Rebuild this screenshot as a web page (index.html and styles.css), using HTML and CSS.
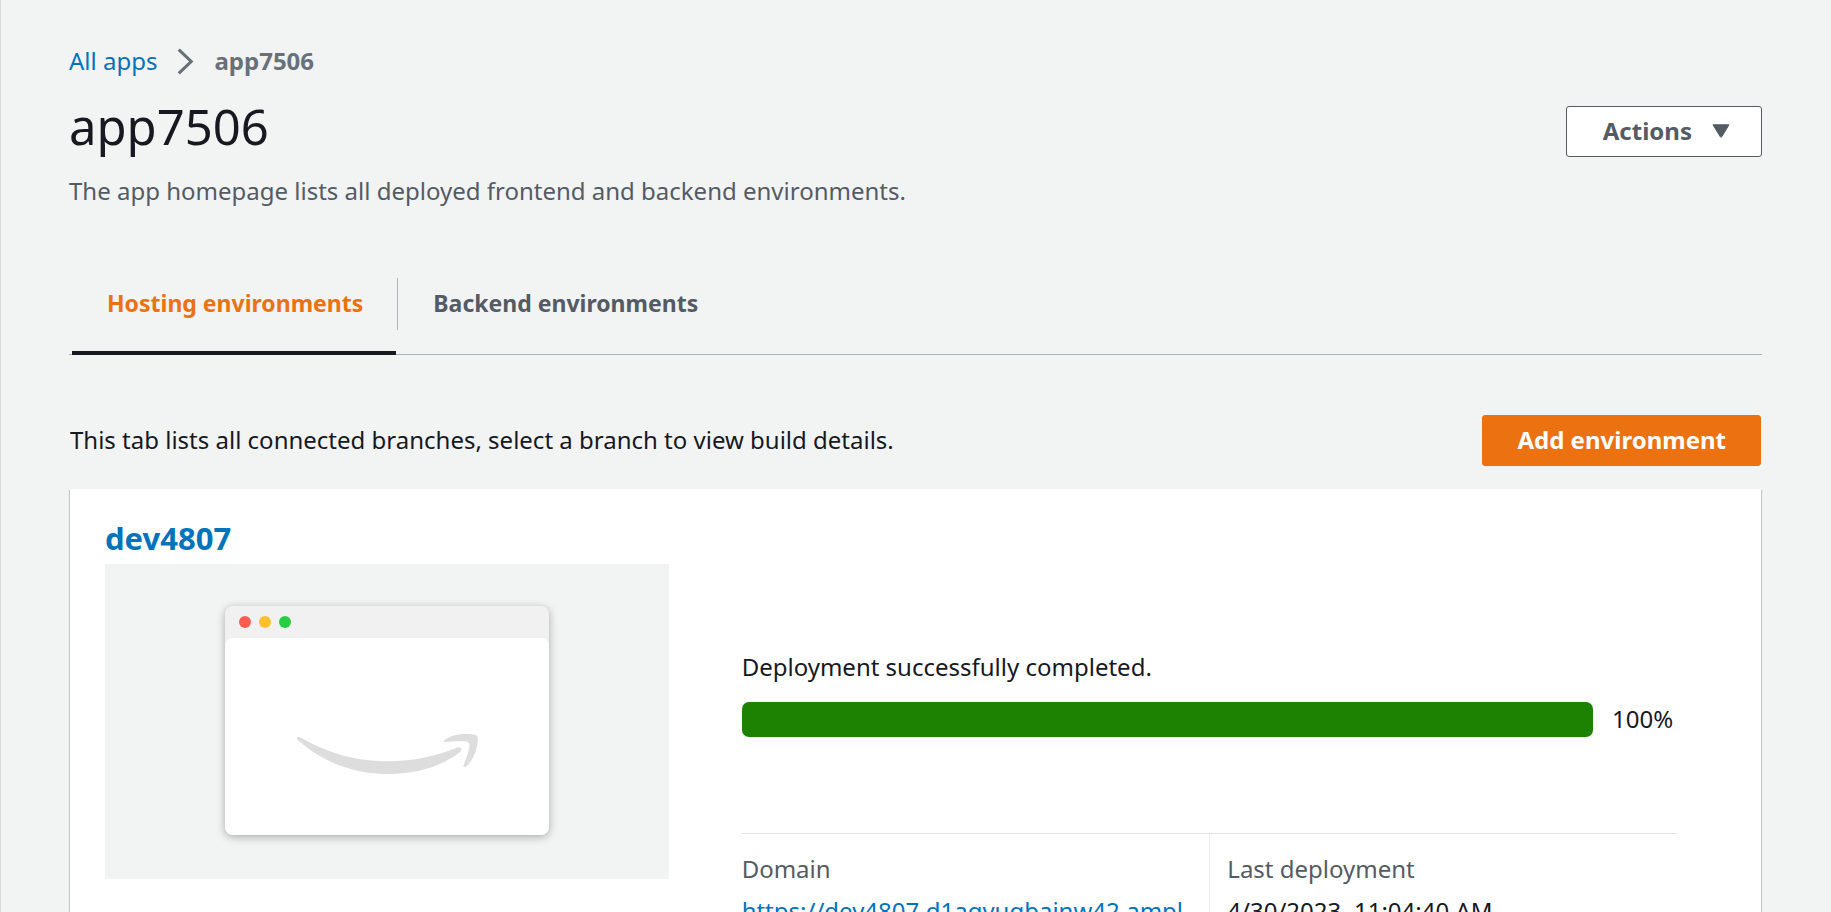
FILE: index.html
```html
<!DOCTYPE html>
<html lang="en">
<head>
<meta charset="utf-8">
<title>app7506</title>
<link rel="stylesheet" href="styles.css">
</head>
<body>
<main class="page">
  <nav class="crumbs" aria-label="Breadcrumb">
    <a href="#apps">All apps</a>
    <svg class="crumb-icon" viewBox="0 0 16 26" aria-hidden="true"><path d="M1.5 1.5L13.500 13L1.5 24.5"/></svg>
    <span class="crumb-current">app7506</span>
  </nav>

  <header class="heading">
    <div>
      <h1 class="title">app7506</h1>
      <p class="lead">The app homepage lists all deployed frontend and backend environments.</p>
    </div>
    <button class="btn btn-normal" type="button">Actions
      <svg class="caret" viewBox="0 0 18 14" aria-hidden="true"><path d="M1 .8H17L9.700 12.800Q9 13.600 8.300 12.800Z"/></svg>
    </button>
  </header>

  <div class="tabs" role="tablist">
    <button class="tab tab-active" type="button" role="tab" aria-selected="true">Hosting environments</button>
    <button class="tab" type="button" role="tab" aria-selected="false">Backend environments</button>
  </div>

  <div class="toolbar">
    <p class="toolbar-text">This tab lists all connected branches, select a branch to view build details.</p>
    <button class="btn btn-primary" type="button">Add environment</button>
  </div>

  <section class="card">
    <h2 class="branch"><a href="#dev4807">dev4807</a></h2>
    <div class="card-body">
      <div class="preview">
        <div class="window">
          <div class="window-bar"><i class="dot red"></i><i class="dot yellow"></i><i class="dot green"></i></div>
          <div class="window-body">
            <svg class="smile" viewBox="0 0 184 42" aria-hidden="true">
              <path d="M3.500 4C28 18 56 28.300 92 28.300C117 28.300 141 23 161.500 14.500C165 13.300 166.800 16.500 164 19C146 33 121 41 92 41C54 41 24 27 1.300 6.500C0 5 1.200 3 3.500 4Z"/>
              <path d="M148.500 7C155 2.300 163 1 170 1C175 1 179.500 1.600 181 2.800C182.300 4 181.800 9 181 13C179.500 21 175.500 29 170 33.500C168.500 34.600 167 34 167.600 32.300C170.500 25 173.500 16 173.500 12C173.500 9.500 171.500 8.600 168 8.300C162 7.800 156 8.600 149.500 9C147.300 9.200 147 8 148.500 7Z"/>
            </svg>
          </div>
        </div>
      </div>
      <div class="status">
        <label class="status-label" for="deploy">Deployment successfully completed.</label>
        <div class="progress-row">
          <progress class="progress" id="deploy" max="100" value="100"></progress>
          <span class="percent">100%</span>
        </div>
        <dl class="facts">
          <div class="fact">
            <dt>Domain</dt>
            <dd><a href="#domain">https://dev4807.d1aqvugbainw42.ampl</a></dd>
          </div>
          <div class="fact">
            <dt>Last deployment</dt>
            <dd>4/30/2023, 11:04:40 AM</dd>
          </div>
        </dl>
      </div>
    </div>
  </section>
</main>
</body>
</html>
```
FILE: styles.css
```css
* { box-sizing: border-box; }

body {
  margin: 0;
  background: #f2f3f3;
  color: #16191f;
  font: 24px/36px "Noto Sans", "Open Sans", sans-serif;
  overflow: hidden;
}

h1, h2, p, dl, dd { margin: 0; }
a { color: #0073bb; text-decoration: none; }
button { font: inherit; font-weight: 700; cursor: pointer; }

.page {
  height: 100vh;
  overflow: hidden;
  padding: 43px 69px 0 68px;
  border-left: 1px solid #d5dbdb;
}

.crumbs { display: flex; align-items: center; gap: 20px; }
.crumb-icon { width: 17px; height: 27px; fill: none; stroke: #687078; stroke-width: 3; }
.crumb-current { color: #687078; font-weight: 700; }

.heading { display: flex; justify-content: space-between; align-items: flex-start; padding-top: 15px; }
.title { font-size: 49px; line-height: 64px; font-weight: 400; }
.lead { color: #545b64; padding-top: 15px; }

.btn {
  display: flex;
  align-items: center;
  justify-content: center;
  height: 51px;
  padding: 0 34px 2px;
  border: 1px solid;
  border-radius: 3px;
  white-space: nowrap;
}
.btn-normal { gap: 20px; margin-top: 12px; padding: 0 31px 2px 36px; background: #fff; border-color: #545b64; color: #545b64; }
.btn-primary { background: #ec7211; border-color: #ec7211; color: #fff; }
.caret { width: 18px; height: 14px; fill: #545b64; stroke: #545b64; stroke-width: 1; stroke-linejoin: round; }

.tabs { display: flex; margin-top: 69px; padding-left: 3px; border-bottom: 1px solid #aab7b8; }
.tab {
  position: relative;
  height: 76px;
  padding: 0 33px 26px 35px;
  border: 0;
  background: none;
  color: #545b64;
  font-size: 23px;
}
.tab + .tab { padding-left: 37px; }
.tab-active { color: #ec7211; }
.tab-active::before { content: ""; position: absolute; right: -2px; top: 0; height: 52px; border-right: 1px solid #aab7b8; }
.tab-active::after { content: ""; position: absolute; left: 0; right: 0; bottom: -1px; height: 4px; background: #16191f; }

.toolbar { display: flex; justify-content: space-between; align-items: center; padding: 60px 1px 23px; }
.toolbar-text { padding-bottom: 2px; }

.card {
  margin: 0 1px;
  padding: 31px 35px;
  background: #fff;
  box-shadow: 0 1px 1px 0 rgba(0, 28, 36, .3), 1px 1px 1px 0 rgba(0, 28, 36, .15), -1px 1px 1px 0 rgba(0, 28, 36, .15);
}
.branch { font-size: 31px; line-height: 36px; padding-bottom: 8px; }
.card-body { display: grid; grid-template-columns: 564fr 985fr; gap: 73px; }

.preview { display: flex; justify-content: center; align-items: center; height: 315px; padding-bottom: 2px; background: #f2f3f3; }
.window { width: 324px; height: 229px; border-radius: 8px; background: #f1f1f1; box-shadow: 0 2px 8px rgba(0, 0, 0, .3); }
.window-bar { display: flex; align-items: center; gap: 8px; height: 32px; padding-left: 14px; }
.dot { width: 12px; height: 12px; border-radius: 50%; }
.red { background: #ff5c54; }
.yellow { background: #ffbf2e; }
.green { background: #29cd42; }
.window-body { height: 197px; padding: 95px 0 0 71px; border-radius: 8px; background: #fff; }
.smile { display: block; width: 184px; height: 42px; fill: #ddd; }

.status { padding: 85px 49px 0 0; }
.status-label { display: block; }
.progress-row { display: flex; align-items: center; gap: 19px; padding-top: 16px; }
.progress { flex: 1; height: 35px; appearance: none; border: 0; border-radius: 7px; overflow: hidden; background: #1d8102; }
.progress::-webkit-progress-bar { background: #eaeded; }
.progress::-webkit-progress-value { background: #1d8102; }
.percent { min-width: 65px; }
.facts { display: grid; grid-template-columns: 1fr 1fr; margin-top: 96px; border-top: 1px solid #e1e4e5; }
.fact { padding: 17px 0 20px; white-space: nowrap; }
.fact + .fact { padding-left: 17px; border-left: 1px solid #eaeded; }
.fact dt { color: #545b64; }
.fact dd { padding-top: 6px; }
```
